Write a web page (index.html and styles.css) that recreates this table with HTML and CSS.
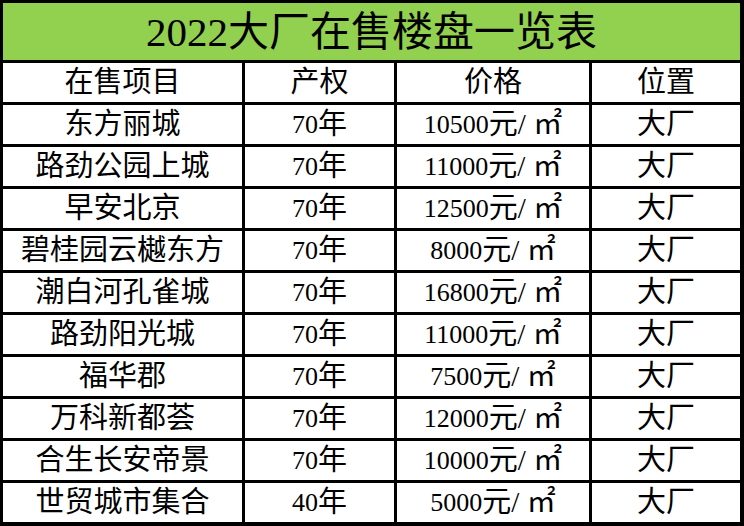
FILE: index.html
```html
<!DOCTYPE html>
<html lang="zh-CN">
<head>
<meta charset="utf-8">
<title>2022大厂在售楼盘一览表</title>
<link rel="stylesheet" href="styles.css">
</head>
<body>
<div class="sheet">
  <div class="title"><span class="n">2022</span>大厂在售楼盘一览表</div>
  <div class="cell">在售项目</div><div class="cell">产权</div><div class="cell">价格</div><div class="cell">位置</div>
  <div class="cell">东方丽城</div><div class="cell"><span class="n">70</span>年</div><div class="cell"><span class="n">10500</span>元/ ㎡</div><div class="cell">大厂</div>
  <div class="cell">路劲公园上城</div><div class="cell"><span class="n">70</span>年</div><div class="cell"><span class="n">11000</span>元/ ㎡</div><div class="cell">大厂</div>
  <div class="cell">早安北京</div><div class="cell"><span class="n">70</span>年</div><div class="cell"><span class="n">12500</span>元/ ㎡</div><div class="cell">大厂</div>
  <div class="cell">碧桂园云樾东方</div><div class="cell"><span class="n">70</span>年</div><div class="cell"><span class="n">8000</span>元/ ㎡</div><div class="cell">大厂</div>
  <div class="cell">潮白河孔雀城</div><div class="cell"><span class="n">70</span>年</div><div class="cell"><span class="n">16800</span>元/ ㎡</div><div class="cell">大厂</div>
  <div class="cell">路劲阳光城</div><div class="cell"><span class="n">70</span>年</div><div class="cell"><span class="n">11000</span>元/ ㎡</div><div class="cell">大厂</div>
  <div class="cell">福华郡</div><div class="cell"><span class="n">70</span>年</div><div class="cell"><span class="n">7500</span>元/ ㎡</div><div class="cell">大厂</div>
  <div class="cell">万科新都荟</div><div class="cell"><span class="n">70</span>年</div><div class="cell"><span class="n">12000</span>元/ ㎡</div><div class="cell">大厂</div>
  <div class="cell">合生长安帝景</div><div class="cell"><span class="n">70</span>年</div><div class="cell"><span class="n">10000</span>元/ ㎡</div><div class="cell">大厂</div>
  <div class="cell">世贸城市集合</div><div class="cell"><span class="n">40</span>年</div><div class="cell"><span class="n">5000</span>元/ ㎡</div><div class="cell">大厂</div>
</div>
</body>
</html>
```

FILE: styles.css
```css
html, body {
  margin: 0;
  padding: 0;
  background: #ffffff;
}

.sheet {
  width: 744px;
  height: 526px;
  box-sizing: border-box;
  padding: 3px 4px 4px 3px;
  background: #000000;
  display: grid;
  grid-template-columns: 239px 149px 192px 148px;
  grid-template-rows: 57px repeat(11, 39px);
  gap: 3px;
  font-family: "Liberation Serif", "Noto Sans CJK SC", serif;
  color: #000000;
}

.title {
  grid-column: 1 / -1;
  background: #92d050;
  display: flex;
  align-items: center;
  justify-content: center;
  font-size: 41px;
  line-height: 1;
  padding-top: 2px;
}

.title .n {
  font-family: "Liberation Serif", serif;
  font-size: 41px;
}

.cell {
  background: #ffffff;
  display: flex;
  align-items: center;
  justify-content: center;
  font-size: 29px;
  line-height: 1;
  white-space: pre;
}

.cell .n {
  font-family: "Liberation Serif", serif;
  font-size: 26px;
}
```
